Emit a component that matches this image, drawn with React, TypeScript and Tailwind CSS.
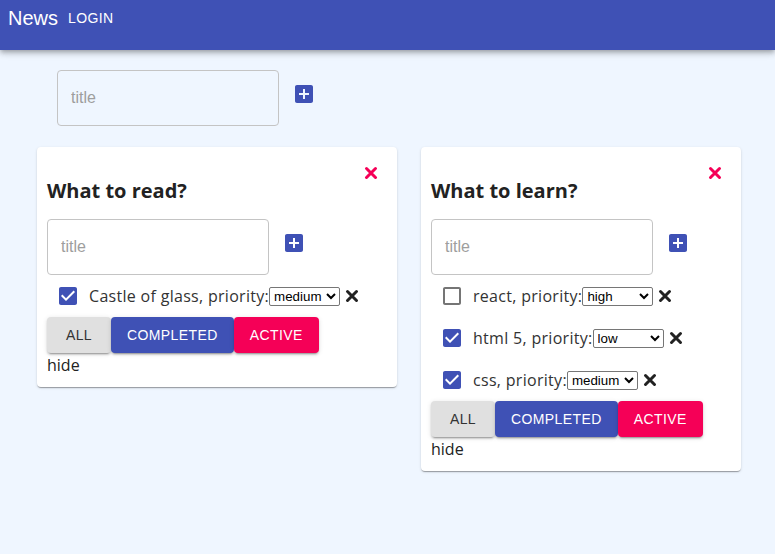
import React from 'react';

type Task = { title: string; priority: string; done: boolean };

const comic = "font-['Open_Sans',sans-serif]";
const sans = "font-['Liberation_Sans',Arial,sans-serif]";

function AddBox({ className = '' }: { className?: string }) {
  return (
    <svg viewBox="0 0 24 24" className={`w-[24px] h-[24px] fill-[#3f51b5] ${className}`}>
      <path d="M19 3H5c-1.11 0-2 .9-2 2v14c0 1.1.89 2 2 2h14c1.1 0 2-.9 2-2V5c0-1.1-.9-2-2-2zm-2 10h-4v4h-2v-4H7v-2h4V7h2v4h4v2z" />
    </svg>
  );
}

// heavy "times" cross, 12px visible inside a 20px box
function CloseIcon({ className = '' }: { className?: string }) {
  return (
    <svg viewBox="0 0 20 20" className={`w-[20px] h-[20px] ${className}`}>
      <path d="M5.5 5.5L14.5 14.5M14.5 5.5L5.5 14.5" strokeWidth="3" strokeLinecap="round" fill="none" />
    </svg>
  );
}

function CheckIcon({ checked }: { checked: boolean }) {
  return (
    <div className="w-[42px] h-[42px] flex items-center justify-center shrink-0">
      <svg viewBox="0 0 24 24" className={`w-[24px] h-[24px] ${checked ? 'fill-[#3f51b5]' : 'fill-[#757575]'}`}>
        {checked ? (
          <path d="M19 3H5c-1.11 0-2 .9-2 2v14c0 1.1.89 2 2 2h14c1.11 0 2-.9 2-2V5c0-1.1-.89-2-2-2zm-9 14l-5-5 1.41-1.41L10 14.17l7.59-7.59L19 8l-9 9z" />
        ) : (
          <path d="M19 5v14H5V5h14m0-2H5c-1.1 0-2 .9-2 2v14c0 1.1.9 2 2 2h14c1.1 0 2-.9 2-2V5c0-1.1-.9-2-2-2z" />
        )}
      </svg>
    </div>
  );
}

function TitleInput({ white }: { white?: boolean }) {
  return (
    <div className="flex items-start gap-[13px]">
      <input
        placeholder="title"
        className={`w-[222px] h-[56px] px-[13px] rounded-[4px] border border-[#c4c4c4] text-[16px] ${sans} text-[#222] placeholder:text-[#9e9e9e] outline-none ${white ? 'bg-white' : 'bg-transparent'}`}
      />
      <AddBox className="mt-[12px]" />
    </div>
  );
}

const btnShadow =
  'shadow-[0_3px_1px_-2px_rgba(0,0,0,0.2),0_2px_2px_0_rgba(0,0,0,0.14),0_1px_5px_0_rgba(0,0,0,0.12)]';

function TodoCard({ title, width, tasks }: { title: string; width: string; tasks: Task[] }) {
  return (
    <div className={`${width} bg-white rounded-[4px] p-[10px] shadow-[0_2px_1px_-1px_rgba(0,0,0,0.2),0_1px_1px_0_rgba(0,0,0,0.14),0_1px_3px_0_rgba(0,0,0,0.12)]`}>
      <div className="h-[22px] flex justify-end items-start pr-[6px]">
        <CloseIcon className="stroke-[#f50057] mt-[6px]" />
      </div>
      <h3 className={`h-[24px] leading-[24px] text-[20px] font-bold text-[#222] ${comic}`}>{title}</h3>
      <div className="mt-[16px]">
        <TitleInput white />
      </div>
      <div>
        {tasks.map((t) => (
          <div key={t.title} className="h-[42px] flex items-center">
            <CheckIcon checked={t.done} />
            <span className={`text-[16px] tracking-[0.3px] text-[#333] ${comic}`}>{t.title}, priority:</span>
            <select
              defaultValue={t.priority}
              className={`w-[71px] h-[19px] text-[13.33px] ${sans} text-black border border-[#767676] rounded-[2px] bg-white`}
            >
              <option value="low">low</option>
              <option value="medium">medium</option>
              <option value="high">high</option>
            </select>
            <CloseIcon className="stroke-[#222] ml-[2px]" />
          </div>
        ))}
      </div>
      <div className={`flex h-[36px] text-[14px] ${sans}`}>
        <button className={`min-w-[64px] px-[16px] rounded-[4px] uppercase tracking-[0.4px] bg-[#e0e0e0] text-[#333] ${btnShadow}`}>
          All
        </button>
        <button className={`px-[16px] rounded-[4px] uppercase tracking-[0.4px] bg-[#3f51b5] text-white ${btnShadow}`}>
          Completed
        </button>
        <button className={`px-[16px] rounded-[4px] uppercase tracking-[0.4px] bg-[#f50057] text-white ${btnShadow}`}>
          Active
        </button>
      </div>
      <div className={`h-[24px] leading-[24px] text-[16px] text-[#222] ${comic}`}>hide</div>
    </div>
  );
}

export default function App() {
  return (
    <div className="min-h-screen w-full bg-[#eff6ff]">
      <header className="h-[50px] bg-[#3f51b5] text-white shadow-[0_2px_4px_-1px_rgba(0,0,0,0.2),0_4px_5px_0_rgba(0,0,0,0.14),0_1px_10px_0_rgba(0,0,0,0.12)]">
        <div className={`h-[36px] flex items-center pl-[8px] gap-[10px] ${sans}`}>
          <span className="text-[20px]">News</span>
          <span className="text-[14px] tracking-[0.4px] mt-[1px]">LOGIN</span>
        </div>
      </header>
      <div className="pl-[57px] pt-[20px]">
        <TitleInput />
      </div>
      <div className="pl-[37px] mt-[21px] flex items-start gap-[24px]">
        <TodoCard
          title="What to read?"
          width="w-[360px]"
          tasks={[{ title: 'Castle of glass', priority: 'medium', done: true }]}
        />
        <TodoCard
          title="What to learn?"
          width="w-[320px]"
          tasks={[
            { title: 'react', priority: 'high', done: false },
            { title: 'html 5', priority: 'low', done: true },
            { title: 'css', priority: 'medium', done: true },
          ]}
        />
      </div>
    </div>
  );
}
